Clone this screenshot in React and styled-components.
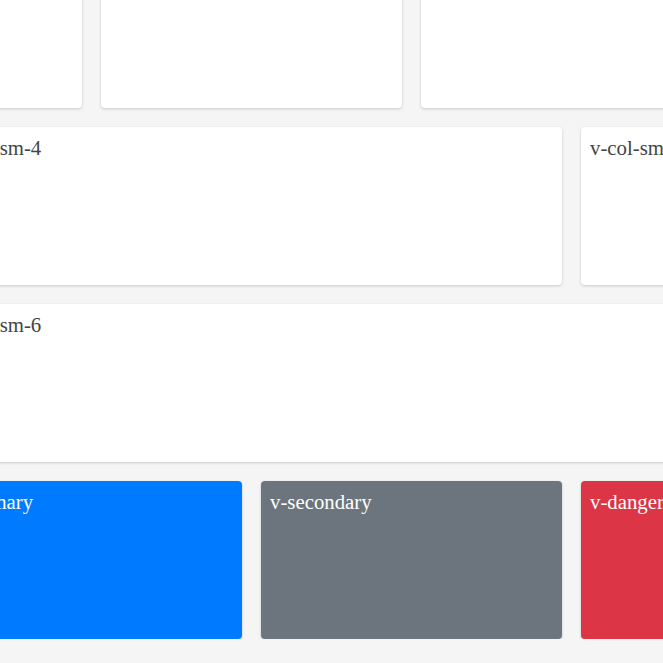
import React from "react";
import styled, { createGlobalStyle } from "styled-components";

const GlobalStyle = createGlobalStyle`
  html, body {
    margin: 0;
    padding: 0;
    background-color: #f5f5f5;
    overflow: hidden;
  }
`;

const Page = styled.div`
  width: 1261px;
  margin: -50px 0 0 -59px;
  display: flex;
  flex-direction: column;
  gap: 19px;
`;

const Row = styled.div`
  display: flex;
  justify-content: center;
  gap: 19px;
`;

const Card = styled.div`
  flex: 0 0 ${(p) => p.$width}px;
  height: 158px;
  box-sizing: border-box;
  padding: 9px 9px;
  border-radius: 4px;
  background-color: ${(p) => p.$bg || "#fff"};
  color: ${(p) => (p.$bg ? "#fff" : "#444")};
  font-family: "Liberation Serif", "Times New Roman", serif;
  font-size: 20.8px;
  box-shadow: 0 1px 3px rgba(0, 0, 0, 0.18);
`;

const rows = [
  [
    { label: "v-col-sm-3", width: 301 },
    { label: "v-col-sm-3", width: 301 },
    { label: "v-col-sm-3", width: 301 },
    { label: "v-col-sm-3", width: 301 },
    { label: "v-col-sm-3", width: 301 },
  ],
  [
    { label: "v-col-sm-4", width: 621 },
    { label: "v-col-sm-8", width: 621 },
  ],
  [{ label: "v-col-sm-6", width: 1261 }],
  [
    { label: "v-primary", width: 301, bg: "#007bff" },
    { label: "v-secondary", width: 301, bg: "#6c757d" },
    { label: "v-danger", width: 301, bg: "#dc3545" },
    { label: "v-success", width: 301, bg: "#28a745" },
  ],
];

export default function App() {
  return (
    <>
      <GlobalStyle />
      <Page>
        {rows.map((row, i) => (
          <Row key={i}>
            {row.map((c, j) => (
              <Card key={j} $width={c.width} $bg={c.bg}>
                {c.label}
              </Card>
            ))}
          </Row>
        ))}
      </Page>
    </>
  );
}
